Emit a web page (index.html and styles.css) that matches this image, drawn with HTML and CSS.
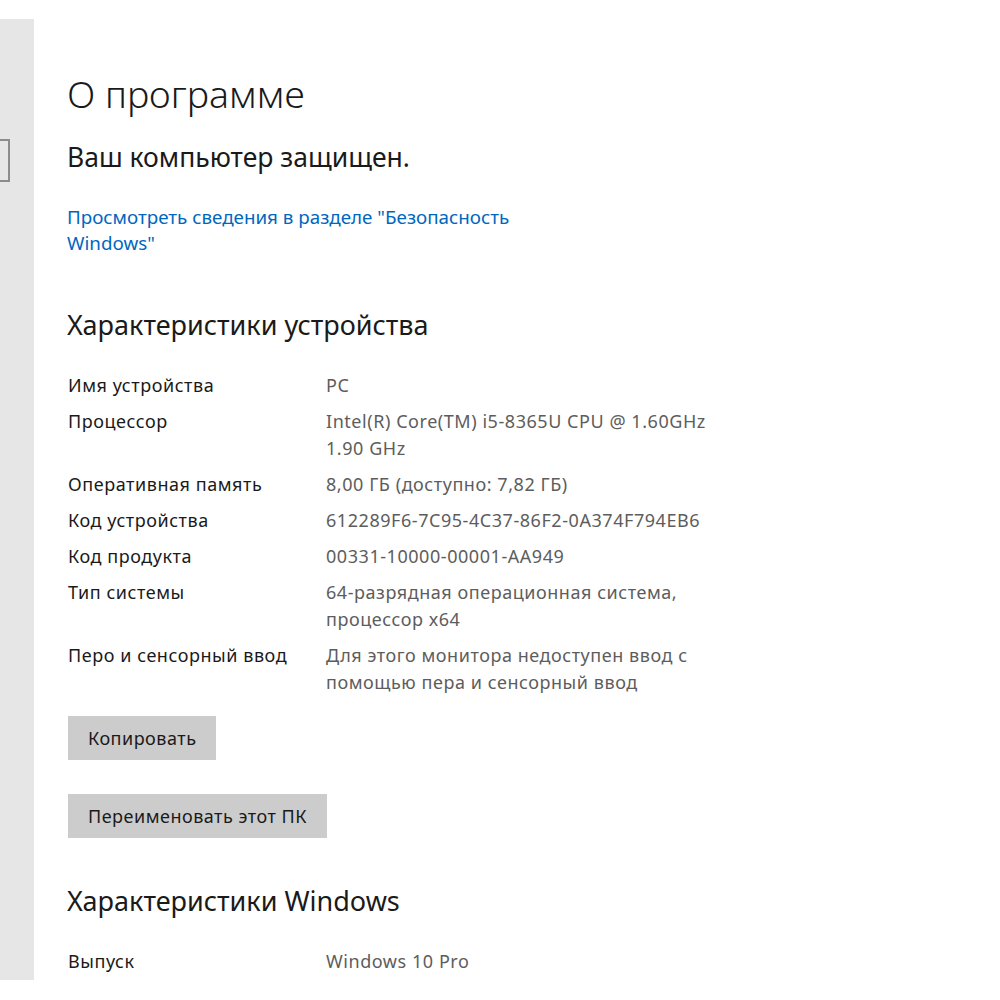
FILE: index.html
```html
<!DOCTYPE html>
<html lang="ru">

<head>
  <meta charset="UTF-8">
  <meta name="viewport" content="width=device-width, initial-scale=1.0">
  <title>О программе</title>
  <link rel="stylesheet" href="styles.css">
</head>

<body>
  <div class="window">
    <div class="sidebar">
      <div class="sidebar-box"></div>
    </div>
    <div class="content">
      <h1 class="title">О программе</h1>
      <p class="status">Ваш компьютер защищен.</p>
      <a class="link" href="#">Просмотреть сведения в разделе "Безопасность Windows"</a>

      <h2 class="section">Характеристики устройства</h2>
      <div class="specs">
        <div class="label">Имя устройства</div>
        <div class="value">PC</div>
        <div class="label">Процессор</div>
        <div class="value">Intel(R) Core(TM) i5-8365U CPU @ 1.60GHz<br>1.90 GHz</div>
        <div class="label">Оперативная память</div>
        <div class="value">8,00 ГБ (доступно: 7,82 ГБ)</div>
        <div class="label">Код устройства</div>
        <div class="value">612289F6-7C95-4C37-86F2-0A374F794EB6</div>
        <div class="label">Код продукта</div>
        <div class="value">00331-10000-00001-AA949</div>
        <div class="label">Тип системы</div>
        <div class="value">64-разрядная операционная система, процессор x64</div>
        <div class="label">Перо и сенсорный ввод</div>
        <div class="value">Для этого монитора недоступен ввод с помощью пера и сенсорный ввод</div>
      </div>

      <div class="buttons">
        <button class="btn">Копировать</button>
        <button class="btn">Переименовать этот ПК</button>
      </div>

      <h2 class="section section-windows">Характеристики Windows</h2>
      <div class="specs">
        <div class="label">Выпуск</div>
        <div class="value">Windows 10 Pro</div>
      </div>
    </div>
  </div>
</body>

</html>
```

FILE: styles.css
```css
body {
  margin: 0;
  background: #ffffff;
  font-family: "Noto Sans", "Open Sans", sans-serif;
  color: #1a1a1a;
}

.window {
  display: flex;
  height: 1000px;
  overflow: hidden;
}

.sidebar {
  width: 34px;
  height: 961px;
  margin-top: 19px;
  background-color: #e6e6e6;
  flex-shrink: 0;
}

.sidebar-box {
  width: 8px;
  height: 39px;
  margin-top: 120px;
  border: 2px solid #8c8c8c;
  border-left: none;
}

.content {
  padding-left: 33px;
  padding-top: 70px;
}

.title {
  margin: 0;
  font-size: 37.5px;
  font-weight: 300;
  line-height: 48px;
}

.status {
  margin: 24px 0 0;
  font-size: 26.5px;
  font-weight: 400;
  line-height: 30px;
}

.link {
  display: block;
  width: 460px;
  margin-top: 32px;
  font-size: 18.8px;
  line-height: 26px;
  color: #0067c0;
  text-decoration: none;
}

.section {
  margin: 52px 0 0;
  font-size: 27px;
  font-weight: 400;
  line-height: 34px;
}

.section-windows {
  margin-top: 46px;
}

.specs {
  display: grid;
  grid-template-columns: 258px 392px;
  row-gap: 9px;
  margin-top: 30px;
  padding-left: 1px;
  font-size: 18px;
  letter-spacing: 0.55px;
  line-height: 27px;
}

.value {
  color: #5d5d5d;
}

.buttons {
  display: flex;
  flex-direction: column;
  align-items: flex-start;
  gap: 34px;
  margin-top: 20px;
  padding-left: 1px;
}

.btn {
  height: 44px;
  padding: 0 20px;
  border: none;
  background-color: #cccccc;
  font-family: inherit;
  font-size: 18px;
  letter-spacing: 0.5px;
  color: #1a1a1a;
}
```
